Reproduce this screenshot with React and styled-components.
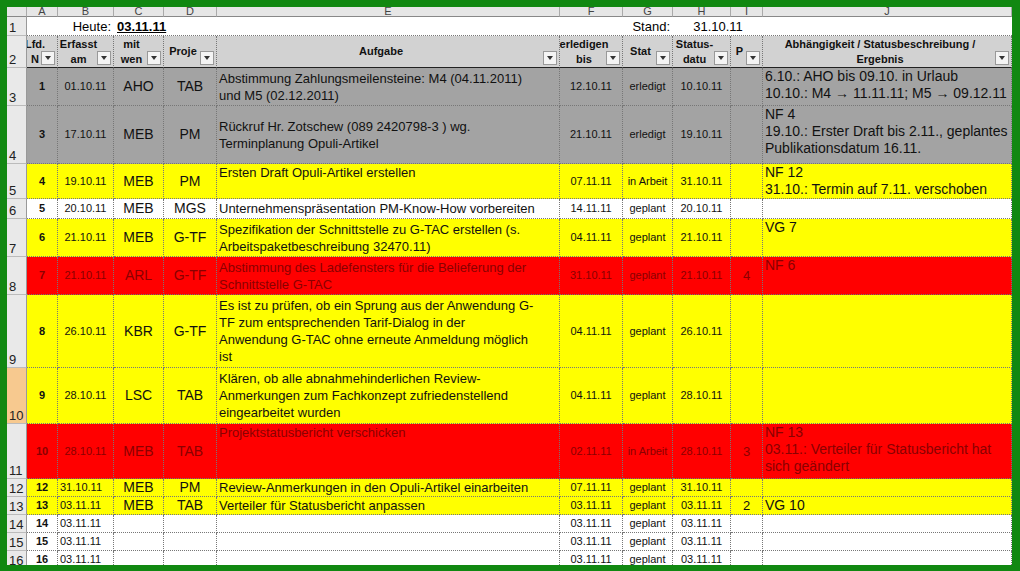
import React from "react";
import styled, { createGlobalStyle } from "styled-components";

const G = createGlobalStyle`
  html,body{margin:0;padding:0;background:#0b8a0b;}
  body{font-family:"Liberation Sans",Arial,sans-serif;}
`;
const Frame = styled.div`
  width:1020px;height:571px;box-sizing:border-box;padding:7px 8px 6px 7px;background:#118811;overflow:hidden;
`;
const Sheet = styled.div`
  display:grid;
  grid-template-columns:20px 31px 56px 50px 53px 343px 63px 50px 58px 32px 249px;
  grid-template-rows:10px 19px 32px 38px 58px 35px 20px 38px 38px 73px 56px 55px 18px 18px 18px 18px 18px;
  background:#fff;overflow:hidden;height:558px;
`;
const bgs={gray:"#a3a3a3",yellow:"#ffff00",red:"#ff0000",white:"#fff",head:"#d2d2d2"};
const Cell = styled.div`
  background:${p=>bgs[p.$bg]||"#fff"};
  color:${p=>p.$bg==="red"?"#8a0000":"#111"};
  border-right:1px dotted #777;border-bottom:1px dotted #777;
  font-size:${p=>p.$fs||13}px;font-weight:${p=>p.$b?700:400};
  display:flex;align-items:center;justify-content:${p=>p.$al==="l"?"flex-start":"center"};
  text-align:${p=>p.$al==="l"?"left":"center"};
  padding:0 2px;box-sizing:border-box;line-height:17px;overflow:hidden;white-space:pre-line;
  ${p=>p.$top?"align-items:flex-start;":""}
  position:relative;
`;
const Head = styled(Cell)`
  border-bottom:1px solid #222;justify-content:center;padding-right:16px;line-height:15px;
`;
const RowH = styled.div`
  background:${p=>p.$sel?"#f7c98f":"#e9e9e9"};color:#222;font-size:13px;border-right:1px solid #999;border-bottom:1px solid #bbb;
  display:flex;align-items:flex-end;padding-left:2px;box-sizing:border-box;line-height:15px;
`;
const ColH = styled.div`
  background:#e6e6e6;color:#444;font-size:11px;border-right:1px solid #aaa;border-bottom:1px solid #888;
  display:flex;justify-content:center;align-items:flex-end;line-height:9px;overflow:hidden;
`;
const Drop = styled.span`
  position:absolute;right:2px;bottom:2px;width:14px;height:14px;background:#f4f4f4;border:1px solid #999;box-sizing:border-box;
  display:flex;align-items:center;justify-content:center;
  &::after{content:"";border-left:3px solid transparent;border-right:3px solid transparent;border-top:4px solid #333;}
`;
const Top = styled.div`grid-column:2 / span 10;display:grid;grid-template-columns:31px 56px 50px 53px 343px 63px 50px 58px 32px 249px;font-size:13px;border-bottom:1px dotted #777;`;
const T = styled.div`display:flex;align-items:center;justify-content:${p=>p.$j||"flex-end"};padding:0 3px;${p=>p.$u?"text-decoration:underline;font-weight:700;":""}${p=>p.$span?"grid-column:span 2;":""}`;

const rows=[
 ["gray","1","01.10.11","AHO","TAB","Abstimmung Zahlungsmeilensteine: M4 (04.11.2011)\nund M5 (02.12.2011)","12.10.11","erledigt","10.10.11","","6.10.: AHO bis 09.10. in Urlaub\n10.10.: M4 → 11.11.11; M5 → 09.12.11"],
 ["gray","3","17.10.11","MEB","PM","Rückruf Hr. Zotschew (089 2420798-3 ) wg.\nTerminplanung Opuli-Artikel","21.10.11","erledigt","19.10.11","","NF 4\n19.10.: Erster Draft bis 2.11., geplantes\nPublikationsdatum 16.11."],
 ["yellow","4","19.10.11","MEB","PM","Ersten Draft Opuli-Artikel erstellen","07.11.11","in Arbeit","31.10.11","","NF 12\n31.10.: Termin auf 7.11. verschoben"],
 ["white","5","20.10.11","MEB","MGS","Unternehmenspräsentation PM-Know-How vorbereiten","14.11.11","geplant","20.10.11","",""],
 ["yellow","6","21.10.11","MEB","G-TF","Spezifikation der Schnittstelle zu G-TAC erstellen (s.\nArbeitspaketbeschreibung 32470.11)","04.11.11","geplant","21.10.11","","VG 7"],
 ["red","7","21.10.11","ARL","G-TF","Abstimmung des Ladefensters für die Belieferung der\nSchnittstelle G-TAC","31.10.11","geplant","21.10.11","4","NF 6"],
 ["yellow","8","26.10.11","KBR","G-TF","Es ist zu prüfen, ob ein Sprung aus der Anwendung G-\nTF zum entsprechenden Tarif-Dialog in der\nAnwendung G-TAC ohne erneute Anmeldung möglich\nist","04.11.11","geplant","26.10.11","",""],
 ["yellow","9","28.10.11","LSC","TAB","Klären, ob alle abnahmehinderlichen Review-\nAnmerkungen zum Fachkonzept zufriedenstellend\neingearbeitet wurden","04.11.11","geplant","28.10.11","",""],
 ["red","10","28.10.11","MEB","TAB","Projektstatusbericht verschicken","02.11.11","in Arbeit","28.10.11","3","NF 13\n03.11.: Verteiler für Statusbericht hat\nsich geändert"],
 ["yellow","12","31.10.11","MEB","PM","Review-Anmerkungen in den Opuli-Artikel einarbeiten","07.11.11","geplant","31.10.11","",""],
 ["yellow","13","03.11.11","MEB","TAB","Verteiler für Statusbericht anpassen","03.11.11","geplant","03.11.11","2","VG 10"],
 ["white","14","03.11.11","","","","03.11.11","geplant","03.11.11","",""],
 ["white","15","03.11.11","","","","03.11.11","geplant","03.11.11","",""],
 ["white","16","03.11.11","","","","03.11.11","geplant","03.11.11","",""],
];
const heads=["Lfd.\nN","Erfasst\nam","mit\nwen","Proje","Aufgabe","erledigen\nbis","Stat","Status-\ndatu","P","Abhängigkeit / Statusbeschreibung /\nErgebnis"];

export default function App(){
  return <><G/><Frame><Sheet>
    <ColH/>{"ABCDEFGHIJ".split("").map(c=><ColH key={c}>{c}</ColH>)}
    <RowH>1</RowH>
    <Top><T/><T>Heute:</T><T $j="flex-start" $u>03.11.11</T><T/><T/><T/><T>Stand:</T><T $j="center" $span>31.10.11</T><T/></Top>
    <RowH>2</RowH>
    {heads.map((h,i)=><Head key={i} $bg="head" $b $fs={11}>{h}<Drop/></Head>)}
    {rows.map((r,ri)=>{
      const n=ri+3;
      const top=ri===8;
      return <React.Fragment key={ri}>
        <RowH $sel={n===10}>{n}</RowH>
        <Cell $bg={r[0]} $b $fs={11}>{r[1]}</Cell>
        <Cell $bg={r[0]} $fs={11} $al={n>=12?"l":"c"}>{r[2]}</Cell>
        <Cell $bg={r[0]} $fs={14}>{r[3]}</Cell>
        <Cell $bg={r[0]} $fs={14}>{r[4]}</Cell>
        <Cell $bg={r[0]} $al="l" $fs={13} $top={r[5].split("\n").length<2&&ri!==3&&n<12||top}>{r[5]}</Cell>
        <Cell $bg={r[0]} $fs={11}>{r[6]}</Cell>
        <Cell $bg={r[0]} $fs={11}>{r[7]}</Cell>
        <Cell $bg={r[0]} $fs={11}>{r[8]}</Cell>
        <Cell $bg={r[0]} $fs={13}>{r[9]}</Cell>
        <Cell $bg={r[0]} $al="l" $fs={14} $top>{r[10]}</Cell>
      </React.Fragment>;
    })}
  </Sheet></Frame></>;
}
